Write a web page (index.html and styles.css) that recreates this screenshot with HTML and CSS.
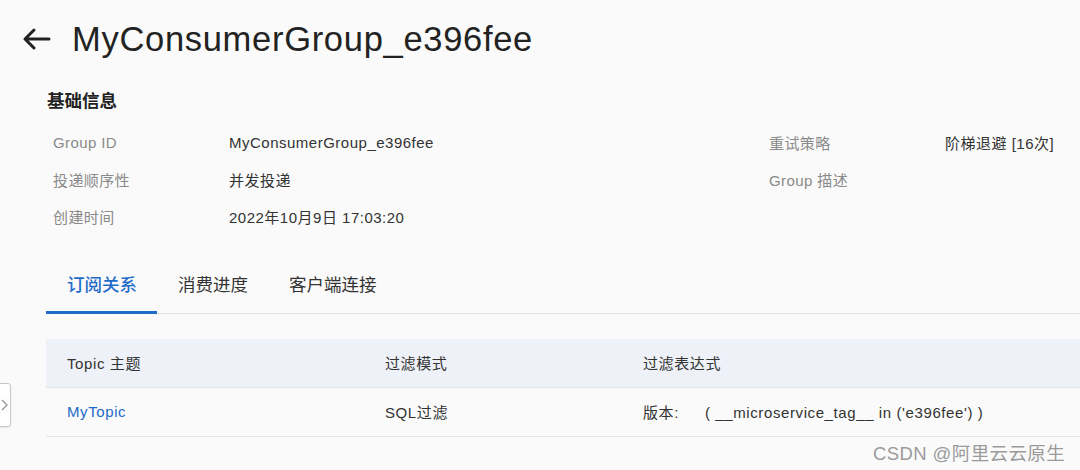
FILE: index.html
```html
<!DOCTYPE html>
<html lang="zh">
<head>
<meta charset="utf-8">
<link rel="stylesheet" href="styles.css">
</head>
<body>
<div class="page">
  <header class="title-bar">
    <svg class="back" width="30" height="24" viewBox="0 0 30 24"><path d="M28 12H4M13 3L4 12l9 9" fill="none" stroke="#222" stroke-width="3" stroke-linecap="round" stroke-linejoin="round"/></svg>
    <h1 class="title">MyConsumerGroup_e396fee</h1>
  </header>
  <section class="info">
    <h2 class="section-title">基础信息</h2>
    <div class="info-grid">
      <div class="col">
        <div class="row"><span class="label">Group ID</span><span class="value">MyConsumerGroup_e396fee</span></div>
        <div class="row"><span class="label">投递顺序性</span><span class="value">并发投递</span></div>
        <div class="row"><span class="label">创建时间</span><span class="value">2022年10月9日 17:03:20</span></div>
      </div>
      <div class="col right">
        <div class="row"><span class="label">重试策略</span><span class="value">阶梯退避 [16次]</span></div>
        <div class="row"><span class="label">Group 描述</span><span class="value"></span></div>
      </div>
    </div>
  </section>
  <nav class="tabs">
    <span class="tab active">订阅关系</span>
    <span class="tab">消费进度</span>
    <span class="tab">客户端连接</span>
  </nav>
  <div class="table">
    <div class="tr th">
      <span class="c1">Topic 主题</span><span class="c2">过滤模式</span><span class="c3">过滤表达式</span>
    </div>
    <div class="tr">
      <span class="c1 link">MyTopic</span><span class="c2">SQL过滤</span><span class="c3"><span class="expr-key">版本:</span>( __microservice_tag__ in ('e396fee') )</span>
    </div>
  </div>
</div>
<div class="side-toggle"><svg width="8" height="12" viewBox="0 0 8 12"><path d="M1 1l5 5-5 5" fill="none" stroke="#999" stroke-width="1.4"/></svg></div>
<div class="watermark">CSDN @阿里云云原生</div>
</body>
</html>
```
FILE: styles.css
```css
html, body {
  margin: 0;
  padding: 0;
  background: #fafafa;
  font-family: "Liberation Sans", "Noto Sans CJK SC", sans-serif;
  color: #333;
  width: 1080px;
  height: 470px;
  overflow: hidden;
  position: relative;
}
.page {
  padding: 0 0 0 46px;
}
.title-bar {
  display: flex;
  align-items: center;
  height: 78px;
  margin-left: -25px;
  gap: 21px;
}
.back { flex: none; }
.title {
  margin: 0;
  font-size: 34.5px;
  font-weight: 400;
  color: #222;
  letter-spacing: 0.7px;
}
.section-title {
  margin: 12px 0 0 1px;
  font-size: 17.5px;
  font-weight: 700;
  color: #222;
  line-height: 22px;
}
.info-grid {
  display: flex;
  margin-top: 12px;
  padding-left: 7px;
}
.col { width: 716px; }
.col.right { width: auto; }
.row {
  display: flex;
  height: 37px;
  align-items: center;
  font-size: 15px;
}
.label {
  color: #8a8a8a;
  width: 176px;
  letter-spacing: 0.4px;
}
.value { color: #333; letter-spacing: 0.5px; }
.tabs {
  margin-top: 28px;
  display: flex;
  border-bottom: 1px solid #e3e3e3;
  height: 50px;
}
.tab {
  font-size: 17.5px;
  color: #333;
  padding: 0 20px 5px 21px;
  height: 50px;
  line-height: 45px;
  box-sizing: border-box;
  position: relative;
}
.tab.active {
  color: #1f6bc9;
  font-weight: 500;
}
.tab.active::after {
  content: "";
  position: absolute;
  left: 0;
  right: 0;
  bottom: -1px;
  height: 3px;
  background: #1f6bc9;
}
.table {
  margin-top: 25px;
}
.tr {
  display: flex;
  height: 47px;
  align-items: center;
  font-size: 15px;
  letter-spacing: 0.6px;
  border-bottom: 1px solid #e6e6e6;
  padding-left: 21px;
  padding-bottom: 1px;
}
.th {
  background: #eef1f7;
  border-bottom: 1px solid #e2e5ec;
  color: #333;
}
.c1 { width: 318px; }
.c2 { width: 258px; }
.expr-key { display: inline-block; width: 62px; }
.link { color: #1f6bc9; }
.side-toggle {
  position: absolute;
  left: -4px;
  top: 383px;
  width: 13px;
  height: 42px;
  border: 1px solid #c8c8c8;
  border-radius: 0 3px 3px 0;
  background: #fff;
  display: flex;
  align-items: center;
  justify-content: center;
  box-shadow: 0 1px 2px rgba(0,0,0,0.08);
}
.side-toggle svg { margin-left: 2px; }
.watermark {
  position: absolute;
  left: 873px;
  top: 439px;
  font-size: 18.5px;
  color: #9a9a9a;
  letter-spacing: 0.4px;
}
```
